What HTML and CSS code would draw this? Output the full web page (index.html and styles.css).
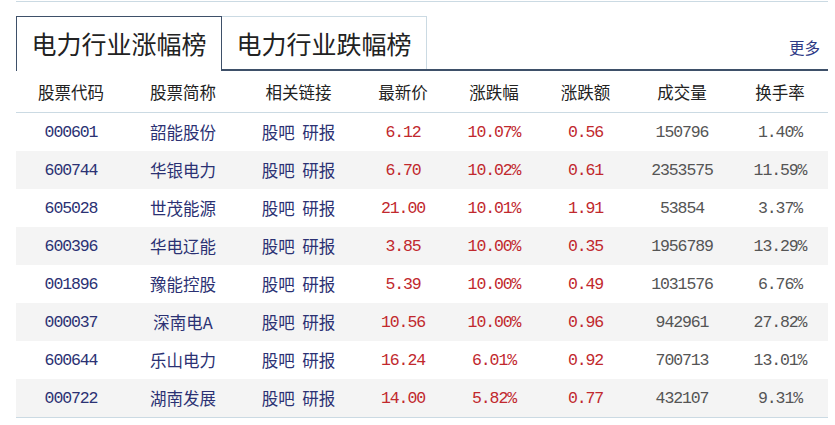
FILE: index.html
```html
<!DOCTYPE html>
<html lang="zh-CN">
<head>
<meta charset="utf-8">
<title>电力行业涨幅榜</title>
<link rel="stylesheet" href="styles.css">
</head>
<body>
<div class="wrap">
  <div class="topline"></div>
  <div class="tabs">
    <div class="tab active">电力行业涨幅榜</div>
    <div class="tab">电力行业跌幅榜</div>
    <a class="more" href="#">更多</a>
  </div>
  <table class="list">
    <colgroup>
      <col class="c1"><col class="c2"><col class="c3"><col class="c4"><col class="c5"><col class="c6"><col class="c7"><col class="c8">
    </colgroup>
    <thead>
      <tr><th>股票代码</th><th>股票简称</th><th>相关链接</th><th>最新价</th><th>涨跌幅</th><th>涨跌额</th><th>成交量</th><th>换手率</th></tr>
    </thead>
    <tbody>
      <tr><td class="num code">000601</td><td class="name">韶能股份</td><td class="links"><a href="#">股吧</a> <a href="#">研报</a></td><td class="num up">6.12</td><td class="num up">10.07%</td><td class="num up">0.56</td><td class="num gray">150796</td><td class="num gray">1.40%</td></tr>
      <tr><td class="num code">600744</td><td class="name">华银电力</td><td class="links"><a href="#">股吧</a> <a href="#">研报</a></td><td class="num up">6.70</td><td class="num up">10.02%</td><td class="num up">0.61</td><td class="num gray">2353575</td><td class="num gray">11.59%</td></tr>
      <tr><td class="num code">605028</td><td class="name">世茂能源</td><td class="links"><a href="#">股吧</a> <a href="#">研报</a></td><td class="num up">21.00</td><td class="num up">10.01%</td><td class="num up">1.91</td><td class="num gray">53854</td><td class="num gray">3.37%</td></tr>
      <tr><td class="num code">600396</td><td class="name">华电辽能</td><td class="links"><a href="#">股吧</a> <a href="#">研报</a></td><td class="num up">3.85</td><td class="num up">10.00%</td><td class="num up">0.35</td><td class="num gray">1956789</td><td class="num gray">13.29%</td></tr>
      <tr><td class="num code">001896</td><td class="name">豫能控股</td><td class="links"><a href="#">股吧</a> <a href="#">研报</a></td><td class="num up">5.39</td><td class="num up">10.00%</td><td class="num up">0.49</td><td class="num gray">1031576</td><td class="num gray">6.76%</td></tr>
      <tr><td class="num code">000037</td><td class="name">深南电A</td><td class="links"><a href="#">股吧</a> <a href="#">研报</a></td><td class="num up">10.56</td><td class="num up">10.00%</td><td class="num up">0.96</td><td class="num gray">942961</td><td class="num gray">27.82%</td></tr>
      <tr><td class="num code">600644</td><td class="name">乐山电力</td><td class="links"><a href="#">股吧</a> <a href="#">研报</a></td><td class="num up">16.24</td><td class="num up">6.01%</td><td class="num up">0.92</td><td class="num gray">700713</td><td class="num gray">13.01%</td></tr>
      <tr><td class="num code">000722</td><td class="name">湖南发展</td><td class="links"><a href="#">股吧</a> <a href="#">研报</a></td><td class="num up">14.00</td><td class="num up">5.82%</td><td class="num up">0.77</td><td class="num gray">432107</td><td class="num gray">9.31%</td></tr>
    </tbody>
  </table>
</div>
</body>
</html>
```
FILE: styles.css
```css
html, body {
  margin: 0;
  padding: 0;
  background: #fff;
}
body {
  font-family: "Noto Sans CJK SC", "Liberation Sans", sans-serif;
  color: #222;
}
.wrap {
  margin-left: 16px;
  width: 812px;
}
.topline {
  margin-top: 1px;
  border-top: 1px solid #cbdae3;
}
.tabs {
  margin-top: 14px;
  display: flex;
  align-items: flex-start;
  height: 53px;
  border-bottom: 2px solid #3e5069;
}
.tab {
  box-sizing: border-box;
  display: flex;
  align-items: center;
  justify-content: center;
  font-size: 25px;
  line-height: 1;
  color: #222;
  background: #fff;
}
.tab.active {
  width: 206px;
  height: 55px;
  border: 1px solid #3e5069;
  border-bottom: 0;
  padding-bottom: 2px;
  position: relative;
  z-index: 1;
}
.tab:not(.active) {
  width: 205px;
  height: 53px;
  border-top: 1px solid #cbdae3;
  border-right: 1px solid #cbdae3;
}
.more {
  margin-left: auto;
  align-self: flex-end;
  margin-bottom: 14px;
  margin-right: 8px;
  font-size: 15.5px;
  line-height: 16px;
  color: #2f3a86;
  text-decoration: none;
}
.list {
  width: 812px;
  table-layout: fixed;
  border-collapse: collapse;
  border-spacing: 0;
}
.c1 { width: 110px; }
.c2 { width: 114px; }
.c3 { width: 117px; }
.c4 { width: 92px; }
.c5 { width: 90px; }
.c6 { width: 93px; }
.c7 { width: 100px; }
.c8 { width: 96px; }
.list th {
  height: 41px;
  padding: 0;
  font-weight: normal;
  font-size: 16.5px;
  color: #222;
  text-align: center;
  border-bottom: 1px solid #cbdae3;
}
.list td {
  height: 38px;
  padding: 0;
  text-align: center;
  font-size: 16.5px;
  white-space: nowrap;
}
.list td a {
  color: inherit;
  text-decoration: none;
}
.list td.links {
  word-spacing: 4px;
}
.list tbody tr:nth-child(even) td {
  background: #f4f4f4;
}
.list tbody tr:last-child td {
  border-bottom: 1px solid #cbdae3;
}
.list td.num {
  font-family: "Liberation Mono", "Noto Sans CJK SC", monospace;
  font-size: 16.5px;
  letter-spacing: -1.1px;
}
.code, .name, .links {
  color: #2b3173;
}
.up {
  color: #c1282d;
}
.gray {
  color: #555;
}
```
